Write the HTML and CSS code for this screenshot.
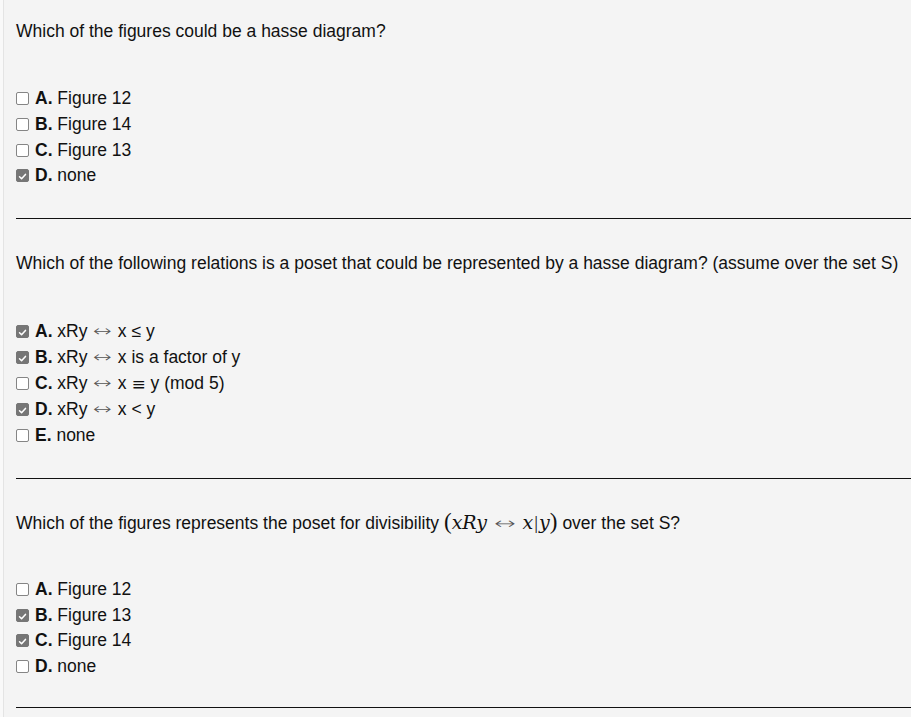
FILE: index.html
```html
<!DOCTYPE html>
<html>
<head>
<meta charset="utf-8">
<link rel="stylesheet" href="styles.css">
</head>
<body>
<div class="page">
  <section class="quiz">
    <p class="q-text">Which of the figures could be a hasse diagram?</p>
    <ul class="options">
      <li class="opt"><span class="cb"></span><b>A.</b>&nbsp;Figure 12</li>
      <li class="opt"><span class="cb"></span><b>B.</b>&nbsp;Figure 14</li>
      <li class="opt"><span class="cb"></span><b>C.</b>&nbsp;Figure 13</li>
      <li class="opt"><span class="cb on"><svg viewBox="0 0 13 13" width="13" height="13"><path d="M3 6.8 L5.4 9.2 L10 4" fill="none" stroke="#fff" stroke-width="1.8" stroke-linecap="round" stroke-linejoin="round"/></svg></span><b>D.</b>&nbsp;none</li>
    </ul>
    <hr class="rule">
  </section>

  <section class="quiz q2">
    <p class="q-text">Which of the following relations is a poset that could be represented by a hasse diagram? (assume over the set S)</p>
    <ul class="options tall">
      <li class="opt"><span class="cb on"><svg viewBox="0 0 13 13" width="13" height="13"><path d="M3 6.8 L5.4 9.2 L10 4" fill="none" stroke="#fff" stroke-width="1.8" stroke-linecap="round" stroke-linejoin="round"/></svg></span><b>A.</b>&nbsp;xRy <span class="m">↔</span> x ≤ y</li>
      <li class="opt"><span class="cb on"><svg viewBox="0 0 13 13" width="13" height="13"><path d="M3 6.8 L5.4 9.2 L10 4" fill="none" stroke="#fff" stroke-width="1.8" stroke-linecap="round" stroke-linejoin="round"/></svg></span><b>B.</b>&nbsp;xRy <span class="m">↔</span> x is a factor of y</li>
      <li class="opt"><span class="cb"></span><b>C.</b>&nbsp;xRy <span class="m">↔</span> x <span class="eq">≡</span> y (mod 5)</li>
      <li class="opt"><span class="cb on"><svg viewBox="0 0 13 13" width="13" height="13"><path d="M3 6.8 L5.4 9.2 L10 4" fill="none" stroke="#fff" stroke-width="1.8" stroke-linecap="round" stroke-linejoin="round"/></svg></span><b>D.</b>&nbsp;xRy <span class="m">↔</span> x &lt; y</li>
      <li class="opt"><span class="cb"></span><b>E.</b>&nbsp;none</li>
    </ul>
    <hr class="rule">
  </section>

  <section class="quiz q3">
    <p class="q-text">Which of the figures represents the poset for divisibility <span class="math"><span class="paren">(</span><i>xRy</i> <span class="m arrow">↔</span> <i>x</i><span class="bar">|</span><i>y</i><span class="paren">)</span></span> over the set S?</p>
    <ul class="options">
      <li class="opt"><span class="cb"></span><b>A.</b>&nbsp;Figure 12</li>
      <li class="opt"><span class="cb on"><svg viewBox="0 0 13 13" width="13" height="13"><path d="M3 6.8 L5.4 9.2 L10 4" fill="none" stroke="#fff" stroke-width="1.8" stroke-linecap="round" stroke-linejoin="round"/></svg></span><b>B.</b>&nbsp;Figure 13</li>
      <li class="opt"><span class="cb on"><svg viewBox="0 0 13 13" width="13" height="13"><path d="M3 6.8 L5.4 9.2 L10 4" fill="none" stroke="#fff" stroke-width="1.8" stroke-linecap="round" stroke-linejoin="round"/></svg></span><b>C.</b>&nbsp;Figure 14</li>
      <li class="opt"><span class="cb"></span><b>D.</b>&nbsp;none</li>
    </ul>
    <hr class="rule">
  </section>
</div>
</body>
</html>
```

FILE: styles.css
```css
html, body {
  margin: 0;
  padding: 0;
  background: #f9f9f9;
}
body {
  font-family: "Liberation Sans", Arial, sans-serif;
  font-size: 17.5px;
  color: #111;
  overflow: hidden;
}
.page {
  margin-left: 3px;
  border-left: 1px solid #e4e4e4;
  background: #f4f4f4;
  min-height: 717px;
  padding: 21px 0 0 12px;
}
.q-text {
  margin: 0;
  height: 20px;
  line-height: 20px;
  white-space: nowrap;
}
.q2 .q-text {
  margin-top: 34px;
}
.q3 .q-text {
  margin-top: 31px;
}
.options {
  list-style: none;
  margin: 45px 0 0 0;
  padding: 0;
}
.q2 .options {
  margin-top: 46px;
}
.q3 .options {
  margin-top: 47px;
}
.opt {
  display: flex;
  align-items: center;
  height: 25.67px;
  white-space: pre;
}
.tall .opt {
  height: 26px;
}
.opt b {
  font-weight: bold;
}
.cb {
  width: 13px;
  height: 13px;
  box-sizing: border-box;
  border: 1px solid #858585;
  border-radius: 2px;
  background: #fff;
  margin-right: 6px;
  flex: none;
  display: flex;
}
.cb.on {
  border-color: #767676;
  background: #767676;
}
.m {
  display: inline-block;
  font-family: "DejaVu Sans", sans-serif;
  font-size: 15px;
  font-weight: 200;
  line-height: 1;
  color: #555;
  transform: scaleX(1.5);
  margin: 0 4px;
}
.eq {
  font-family: "DejaVu Serif", serif;
  font-size: 17px;
  color: #111;
}
.rule {
  border: 0;
  border-top: 1px solid #111;
  height: 0;
  margin: 29px 0 0 0;
}
.q2 .rule { margin-top: 29px; }
.q3 .rule { margin-top: 28px; }
.math {
  font-family: "DejaVu Serif", "Liberation Serif", serif;
  font-size: 19px;
  line-height: 1;
  white-space: nowrap;
}
.math i {
  font-style: italic;
}
.paren {
  font-family: "Liberation Serif", serif;
  font-style: normal;
  font-size: 23px;
}
.m.arrow {
  font-size: 16px;
  transform: scaleX(1.6);
  margin: 0 5px;
}
.bar {
  font-family: "Liberation Serif", serif;
  display: inline-block;
  margin: 0 1px;
}
```
